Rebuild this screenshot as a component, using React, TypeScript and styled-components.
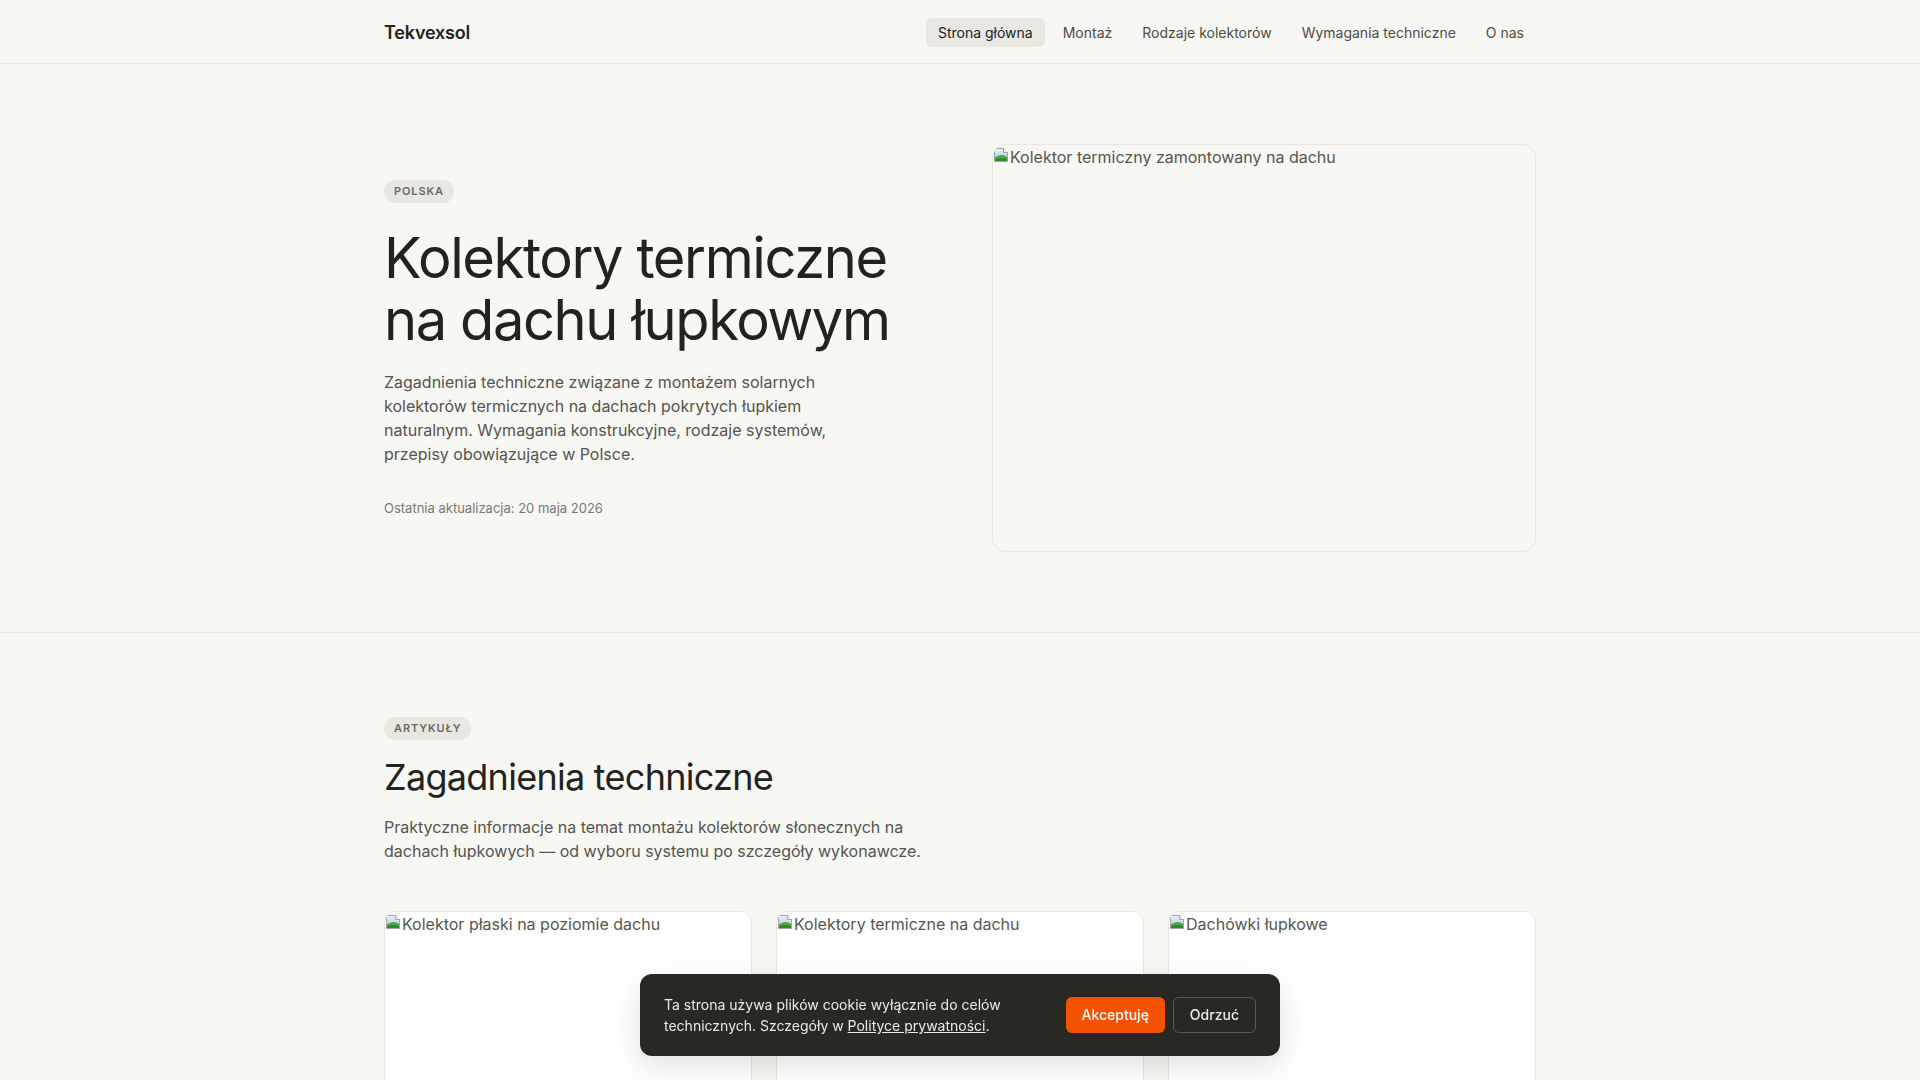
import React from "react";
import styled, { createGlobalStyle } from "styled-components";

const GlobalStyle = createGlobalStyle`
  *, *::before, *::after { box-sizing: border-box; }
  html, body { margin: 0; padding: 0; }
  body {
    background: #f7f7f4;
    color: #23221e;
    font-family: Inter, "Noto Sans", "Liberation Sans", sans-serif;
    -webkit-font-smoothing: antialiased;
  }
  a { color: inherit; }
`;

const Container = styled.div`
  max-width: 1200px;
  margin: 0 auto;
  padding: 0 24px;
`;

/* ---------- header ---------- */

const Header = styled.header`
  border-bottom: 1px solid #e6e5e0;
  background: #f7f7f4;
`;

const HeaderInner = styled(Container)`
  height: 63px;
  padding-top: 1px;
  display: flex;
  align-items: center;
  justify-content: space-between;
`;

const Brand = styled.a`
  font-size: 18px;
  font-weight: 600;
  letter-spacing: -0.01em;
  text-decoration: none;
  color: #23221e;
`;

const Nav = styled.nav`
  display: flex;
  align-items: center;
  gap: 6px;
`;

const NavLink = styled.a<{ $active?: boolean }>`
  display: block;
  padding: 6px 12px;
  border-radius: 6px;
  font-size: 14px;
  line-height: 17px;
  text-decoration: none;
  color: ${(p) => (p.$active ? "#23221e" : "#4d4c46")};
  background: ${(p) => (p.$active ? "#e8e7e2" : "transparent")};
`;

/* ---------- shared ---------- */

const Section = styled.section<{ $bordered?: boolean; $top: number }>`
  padding: ${(p) => p.$top}px 0 80px;
  border-bottom: ${(p) => (p.$bordered ? "1px solid #e6e5e0" : "none")};
`;

const Badge = styled.span`
  display: inline-block;
  padding: 4px 10px;
  border-radius: 999px;
  background: #e8e7e2;
  color: #6b6a63;
  font-size: 11px;
  line-height: 15px;
  font-weight: 600;
  letter-spacing: 0.08em;
  text-transform: uppercase;
`;

/* placeholder shown where a photo failed to load */
const Picture = styled.div<{ $ratio: string; $bg: string; $radius: number; $framed?: boolean }>`
  aspect-ratio: ${(p) => p.$ratio};
  background: ${(p) => p.$bg};
  border-radius: ${(p) => p.$radius}px;
  border: ${(p) => (p.$framed ? "1px solid #e6e5e0" : "none")};
  overflow: hidden;
`;

const AltRow = styled.div`
  display: flex;
  align-items: flex-start;
  gap: 1px;
  font-size: 16px;
  line-height: 24px;
  color: #57564f;
`;

const AltIcon = styled.svg`
  flex: none;
  width: 16px;
  height: 16px;
  margin-top: 2px;
`;

const BrokenImage: React.FC<{ alt: string }> = ({ alt }) => (
  <AltRow>
    <AltIcon viewBox="0 0 16 16">
      <defs>
        <linearGradient id="sky" x1="0" y1="0" x2="0" y2="1">
          <stop offset="0" stopColor="#eaf2fb" />
          <stop offset="1" stopColor="#a9c6e8" />
        </linearGradient>
      </defs>
      <path d="M1.5 1.5h9l4 4v9h-13z" fill="url(#sky)" stroke="#9ea3a8" />
      <path d="M10.5 1.5v4h4" fill="#fff" stroke="#9ea3a8" />
      <path d="M2 14V10.5c2.5-2.2 5.5-3 8.5-2.2 1.4.4 2.6 1.1 3.5 2V14z" fill="#4caa3c" />
      <path d="M2 14v-1.5c3-1.6 7.5-2 12-.6V14z" fill="#2f8a2a" />
    </AltIcon>
    <span>{alt}</span>
  </AltRow>
);

/* ---------- hero ---------- */

const HeroGrid = styled.div`
  display: grid;
  grid-template-columns: 1fr 1fr;
  gap: 64px;
  align-items: center;
`;

const HeroText = styled.div`
  display: flex;
  flex-direction: column;
  align-items: flex-start;
  padding-top: 2px;
`;

const HeroTitle = styled.h1`
  margin: 25px 0 0;
  font-size: 56px;
  line-height: 1.1;
  font-weight: 400;
  letter-spacing: -0.025em;
  color: #23221e;
`;

const Lead = styled.p<{ $max: number; $gap: number }>`
  margin: ${(p) => p.$gap}px 0 0;
  max-width: ${(p) => p.$max}px;
  font-size: 16px;
  line-height: 24px;
  color: #55544e;
`;

const Meta = styled.p`
  margin: 32px 0 0;
  font-size: 13px;
  line-height: 20px;
  color: #7a7972;
`;

/* ---------- articles ---------- */

const SectionTitle = styled.h2`
  margin: 16px 0 0;
  font-size: 36px;
  line-height: 1.2;
  font-weight: 400;
  letter-spacing: -0.02em;
  color: #23221e;
`;

const CardGrid = styled.div`
  margin-top: 48px;
  display: grid;
  grid-template-columns: repeat(3, 1fr);
  gap: 24px;
`;

const Card = styled.article`
  background: #ffffff;
  border: 1px solid #e6e5e0;
  border-radius: 12px;
  overflow: hidden;
`;

/* ---------- cookie banner ---------- */

const Cookie = styled.div`
  position: fixed;
  left: 50%;
  bottom: 24px;
  transform: translateX(-50%);
  width: 640px;
  display: flex;
  align-items: center;
  gap: 24px;
  padding: 20px 24px;
  background: #292823;
  border-radius: 12px;
  box-shadow: 0 10px 30px rgba(0, 0, 0, 0.12);
`;

const CookieText = styled.p`
  flex: 1;
  margin: 0;
  font-size: 14px;
  line-height: 21px;
  color: #ebeae5;
`;

const CookieActions = styled.div`
  display: flex;
  gap: 8px;
  flex: none;
`;

const Button = styled.button<{ $primary?: boolean }>`
  font-family: inherit;
  font-size: 14px;
  line-height: 20px;
  font-weight: 500;
  border-radius: 6px;
  cursor: pointer;
  padding: ${(p) => (p.$primary ? "8px 16px" : "7px 16px")};
  border: ${(p) => (p.$primary ? "none" : "1px solid rgba(255,255,255,0.22)")};
  background: ${(p) => (p.$primary ? "#f55200" : "transparent")};
  color: ${(p) => (p.$primary ? "#ffffff" : "#ebeae5")};
`;

const navItems = [
  "Strona główna",
  "Montaż",
  "Rodzaje kolektorów",
  "Wymagania techniczne",
  "O nas",
];

const cards = [
  "Kolektor płaski na poziomie dachu",
  "Kolektory termiczne na dachu",
  "Dachówki łupkowe",
];

export default function App() {
  return (
    <>
      <GlobalStyle />
      <Header>
        <HeaderInner>
          <Brand href="#">Tekvexsol</Brand>
          <Nav>
            {navItems.map((item, i) => (
              <NavLink key={item} href="#" $active={i === 0}>
                {item}
              </NavLink>
            ))}
          </Nav>
        </HeaderInner>
      </Header>

      <main>
        <Section $bordered $top={80}>
          <Container>
            <HeroGrid>
              <HeroText>
                <Badge>Polska</Badge>
                <HeroTitle>
                  Kolektory termiczne
                  <br />
                  na dachu łupkowym
                </HeroTitle>
                <Lead $max={480} $gap={19}>
                  Zagadnienia techniczne związane z montażem solarnych kolektorów
                  termicznych na dachach pokrytych łupkiem naturalnym. Wymagania
                  konstrukcyjne, rodzaje systemów, przepisy obowiązujące w Polsce.
                </Lead>
                <Meta>Ostatnia aktualizacja: 20 maja 2026</Meta>
              </HeroText>
              <Picture $ratio="4 / 3" $bg="#f7f7f4" $radius={14} $framed>
                <BrokenImage alt="Kolektor termiczny zamontowany na dachu" />
              </Picture>
            </HeroGrid>
          </Container>
        </Section>

        <Section $top={83}>
          <Container>
            <Badge>Artykuły</Badge>
            <SectionTitle>Zagadnienia techniczne</SectionTitle>
            <Lead $max={560} $gap={16}>
              Praktyczne informacje na temat montażu kolektorów słonecznych na
              dachach łupkowych — od wyboru systemu po szczegóły wykonawcze.
            </Lead>
            <CardGrid>
              {cards.map((alt) => (
                <Card key={alt}>
                  <Picture $ratio="4 / 3" $bg="#ffffff" $radius={0}>
                    <BrokenImage alt={alt} />
                  </Picture>
                </Card>
              ))}
            </CardGrid>
          </Container>
        </Section>
      </main>

      <Cookie>
        <CookieText>
          Ta strona używa plików cookie wyłącznie do celów technicznych.
          Szczegóły w <a href="#">Polityce prywatności</a>.
        </CookieText>
        <CookieActions>
          <Button $primary>Akceptuję</Button>
          <Button>Odrzuć</Button>
        </CookieActions>
      </Cookie>
    </>
  );
}
